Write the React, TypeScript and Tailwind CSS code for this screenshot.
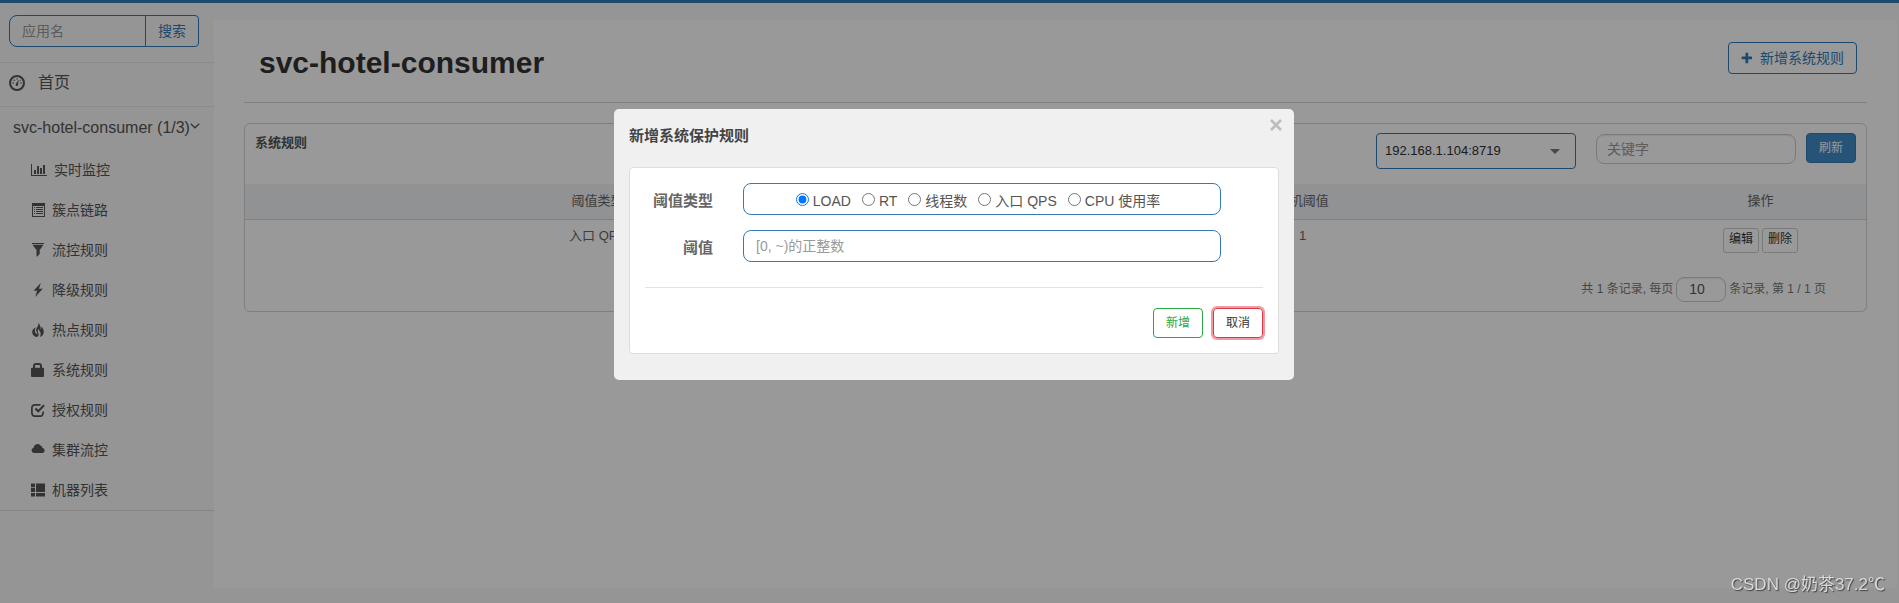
import React from "react";

type IconProps = { className?: string };

function Svg({ className = "h-[14px] w-[14px]", children }: { className?: string; children: React.ReactNode }) {
  return (
    <svg viewBox="0 0 14 14" fill="currentColor" aria-hidden="true" className={`${className} shrink-0`}>
      {children}
    </svg>
  );
}

const DashboardIcon = () => (
  <Svg className="h-4 w-4">
    <circle cx="7" cy="7" r="6.1" fill="none" stroke="currentColor" strokeWidth="1.8" />
    <path d="M6 7.9 8.4 3.9 8 8.4a1.1 1.1 0 1 1-2-.5z" />
    <circle cx="3.6" cy="7" r=".7" />
    <circle cx="4.6" cy="4.6" r=".7" />
    <circle cx="7" cy="3.5" r=".6" />
    <circle cx="10.4" cy="7" r=".7" />
    <circle cx="9.8" cy="4.7" r=".6" />
  </Svg>
);
const StatsIcon = () => (
  <svg viewBox="0 0 16 14" fill="currentColor" aria-hidden="true" className="h-[14px] w-4 shrink-0">
    <path d="M0 1h1v11h15v1H0z" />
    <path d="M3 7h2v4H3zM6 3h2v8H6zM9 5h2v6H9zM12 2h2v9h-2z" />
  </svg>
);
const ListIcon = () => (
  <Svg>
    <path fillRule="evenodd" d="M1 0h13v14H1zM2 3v10h11V3z" />
    <path d="M3 4h1v1H3zM5 4h7v1H5zM3 6h1v1H3zM5 6h7v1H5zM3 8h1v1H3zM5 8h7v1H5zM3 10h1v1H3zM5 10h7v1H5z" />
  </Svg>
);
const FilterIcon = () => (
  <Svg>
    <path d="M1 0h12v1H1zM1.500 1.800h11L8.700 7v4L5.500 14V7z" />
  </Svg>
);
const FlashIcon = () => (
  <Svg>
    <path d="M9.800 0 2.500 7.800h3.600L4.200 14 11.800 5.700H8z" />
  </Svg>
);
const FireIcon = () => (
  <Svg>
    <path d="M7.300 0c.3 1.800-.2 2.700-1 3.900-1 1.500-1.700 2.900-.9 4.600.6 1.300 1.200 1.700 1 2.800C5 11 3.700 9.700 4 7.300 4 6 4.400 5.200 4.300 4.500 2.400 5.700 1 7.300 1.200 9.500c.2 2.200 1.700 3.800 4 4.500 1.500-.2 2.500-1.200 2.500-2.600 0-1.300-1-2.100-1-3.400 0-.9.4-1.600 1-2.300 0 1.500.7 2.100 1.300 3 .9 1.300 1 3.300-.3 5.200 2.500-.8 4.100-2.500 4.100-5 0-2.300-1.200-4-2.900-5.400.3 1.400.2 2.200-.4 2.900C9.700 4 9.200 1.600 7.300 0z" />
  </Svg>
);
const LockIcon = () => (
  <Svg>
    <path
      fillRule="evenodd"
      d="M2 4.800V3A3 3 0 0 1 5 0h3a3 3 0 0 1 3 3v1.800h1a1 1 0 0 1 1 1V13a1 1 0 0 1-1 1H1a1 1 0 0 1-1-1V5.800a1 1 0 0 1 1-1zM4 4.800h5V3.200C9 2.400 8.600 2 7.800 2H5.200C4.400 2 4 2.400 4 3.200z"
    />
  </Svg>
);
const CheckIcon = () => (
  <Svg>
    <path d="M9.500 1.800H4A3.100 3.100 0 0 0 .9 4.900v5.200A3.100 3.100 0 0 0 4 13.200h5a3.100 3.100 0 0 0 3.100-3.100V8.500" fill="none" stroke="currentColor" strokeWidth="1.700" />
    <path d="m3.700 6.200 1.500-1.400 2.100 2 5.100-5.300 1.300 1.400-6.400 6.900z" />
  </Svg>
);
const CloudIcon = () => (
  <Svg>
    <path d="M3 10a2.700 2.700 0 0 1-.4-5.300A3.900 3.900 0 0 1 9.500 2.500a3 3 0 0 1 2 2.400A2.600 2.600 0 0 1 11.600 10z" />
  </Svg>
);
const MachineIcon = () => (
  <Svg>
    <path d="M0 .5h4v3.700H0zM0 5h4v4H0zM0 10h4v3.500H0zM5 .5h9V9H5zM5 10h9v3.500H5z" />
  </Svg>
);
const PlusIcon = ({ className }: IconProps) => (
  <Svg className={className}>
    <path d="M5.200 1h3.200v4.300h4.400v3.200H8.400V13H5.200V8.500H.8V5.300h4.400z" />
  </Svg>
);

const menu = [
  { label: "实时监控", icon: <StatsIcon /> },
  { label: "簇点链路", icon: <ListIcon /> },
  { label: "流控规则", icon: <FilterIcon /> },
  { label: "降级规则", icon: <FlashIcon /> },
  { label: "热点规则", icon: <FireIcon /> },
  { label: "系统规则", icon: <LockIcon /> },
  { label: "授权规则", icon: <CheckIcon /> },
  { label: "集群流控", icon: <CloudIcon /> },
  { label: "机器列表", icon: <MachineIcon /> },
];

const thresholdTypes = ["LOAD", "RT", "线程数", "入口 QPS", "CPU 使用率"];

function Sidebar() {
  return (
    <aside className="w-[214px] shrink-0">
      <form className="flex h-[60px] border-b border-[#e7e7e7] px-[9px] pt-3">
        <input
          aria-label="应用名"
          placeholder="应用名"
          className="h-8 w-[137px] rounded-l-lg border border-[#337ab7] bg-transparent px-3 text-sm placeholder:text-[#999]"
        />
        <button type="button" className="-ml-px h-8 w-[54px] rounded-r border border-[#337ab7] text-sm text-[#337ab7]">
          搜索
        </button>
      </form>
      <nav className="border-b border-[#dcdcdc] text-[#555]">
        <a href="#home" className="flex h-11 items-center gap-[13px] border-b border-[#e7e7e7] pb-1 pl-[9px] text-base">
          <DashboardIcon />
          首页
        </a>
        <a href="#app" className="flex h-[43px] items-center pb-[2px] pl-[13px] text-base whitespace-nowrap">
          svc-hotel-consumer (1/3)
          <svg viewBox="0 0 10 6" className="mb-1 h-[6px] w-[10px]" fill="none" stroke="currentColor" aria-hidden="true">
            <path d="m.8.800 4.200 4 4.200-4" strokeWidth="1.200" />
          </svg>
        </a>
        <ul>
          {menu.map((item) => (
            <li key={item.label}>
              <a href={`#${item.label}`} className="flex h-10 items-center gap-[7px] pl-[31px] text-sm">
                {item.icon}
                {item.label}
              </a>
            </li>
          ))}
        </ul>
      </nav>
    </aside>
  );
}

function RulesCard() {
  return (
    <section className="rounded-md border border-[#d5d5d5]">
      <div className="flex h-[60px] items-start pt-[9px] pr-[10px] pl-[10px]">
        <h2 className="flex-1 text-[13px] leading-5 font-bold text-[#555]">系统规则</h2>
        <div className="relative mr-5">
          <select
            aria-label="机器"
            className="h-9 w-[200px] appearance-none rounded border border-[#337ab7] bg-white px-2 text-[13px] text-[#303030]"
          >
            <option>192.168.1.104:8719</option>
          </select>
          <svg viewBox="0 0 10 5" className="pointer-events-none absolute top-4 right-4 h-[5px] w-[10px] fill-[#777]" aria-hidden="true">
            <path d="M0 0h10L5 5z" />
          </svg>
        </div>
        <input
          aria-label="关键字"
          placeholder="关键字"
          className="mt-px mr-[10px] h-[30px] w-[200px] rounded-lg border border-[#ccc] px-[10px] text-sm shadow-[inset_0_1px_1px_rgba(0,0,0,0.075)] placeholder:text-[#999]"
        />
        <button type="button" className="h-[30px] w-[50px] rounded border border-[#337ab7] bg-[#428bca] text-xs text-white">
          刷新
        </button>
      </div>
      <table className="w-full table-fixed text-center text-[13px] text-[#666]">
        <colgroup>
          <col className="w-[43.5%]" />
          <col className="w-[43.5%]" />
          <col className="w-[13%]" />
        </colgroup>
        <thead className="border-b border-[#d5d5d5] bg-[#f0f3f6]">
          <tr className="h-[35px]">
            <th className="p-0 pb-px font-normal">阈值类型</th>
            <th className="p-0 pb-px font-normal">单机阈值</th>
            <th className="p-0 pb-px font-normal">操作</th>
          </tr>
        </thead>
        <tbody>
          <tr className="align-top">
            <td className="pt-[6px]">入口 QPS</td>
            <td className="pt-[6px]">1</td>
            <td className="pt-2">
              <div className="flex justify-center gap-[3px]">
                <button type="button" className="h-[25px] w-9 rounded-[3px] border border-[#ccc] pb-[2px] text-xs text-[#333]">
                  编辑
                </button>
                <button type="button" className="h-[25px] w-9 rounded-[3px] border border-[#ccc] pb-[2px] text-xs text-[#333]">
                  删除
                </button>
              </div>
            </td>
          </tr>
        </tbody>
      </table>
      <div className="flex items-center justify-end gap-[3px] pt-6 pr-10 pb-[9px] text-xs text-[#777]">
        <span>共 1 条记录, 每页</span>
        <input
          aria-label="每页条数"
          defaultValue="10"
          className="h-[25px] w-[50px] rounded-lg border border-[#ccc] pl-3 text-sm text-[#555] shadow-[inset_0_1px_1px_rgba(0,0,0,0.075)]"
        />
        <span>条记录, 第 1 / 1 页</span>
      </div>
    </section>
  );
}

function RuleDialog() {
  return (
    <div className="fixed inset-0 flex items-start justify-center bg-black/40 pt-[109px] pl-[9px]">
      <div role="dialog" aria-labelledby="dialog-title" className="relative w-[680px] rounded-[5px] bg-[#f0f0f0] px-[15px] pt-4 pb-[26px]">
        <button type="button" aria-label="关闭" className="absolute top-[10px] right-3 text-[#bcbcbc]">
          <svg viewBox="0 0 12 12" className="h-3 w-3" fill="none" stroke="currentColor" strokeWidth="2.600" aria-hidden="true">
            <path d="m1 1 10 10M11 1 1 11" />
          </svg>
        </button>
        <h3 id="dialog-title" className="mb-[20px] text-[15px] leading-[22px] font-bold text-[#444]">
          新增系统保护规则
        </h3>
        <form className="rounded border border-[#ddd] bg-white px-[15px] pt-[15px] pb-[15px]">
          <div role="radiogroup" aria-labelledby="type-label" className="mb-[15px] flex items-center">
            <span id="type-label" className="mr-[30px] w-[68px] pt-1 text-right text-[15px] font-bold whitespace-nowrap text-[#666]">
              阈值类型
            </span>
            <div className="flex h-8 w-[478px] items-center justify-center gap-[11px] rounded-lg border border-[#337ab7] pr-2 text-sm text-[#555]">
              {thresholdTypes.map((type, i) => (
                <label key={type} className="flex items-center gap-1 pt-1 whitespace-nowrap">
                  <input type="radio" name="thresholdType" defaultChecked={i === 0} className="mb-[3px] h-[13px] w-[13px]" />
                  {type}
                </label>
              ))}
            </div>
          </div>
          <div className="flex items-center">
            <label htmlFor="threshold" className="mr-[30px] w-[68px] pt-1 text-right text-[15px] font-bold text-[#666]">
              阈值
            </label>
            <input
              id="threshold"
              placeholder="[0, ~)的正整数"
              className="h-8 w-[478px] rounded-lg border border-[#337ab7] px-3 text-sm placeholder:text-[#999]"
            />
          </div>
          <hr className="mt-[25px] mb-5 border-[#e3e3e3]" />
          <div className="flex justify-end gap-[10px]">
            <button type="button" className="h-[30px] w-[50px] rounded border border-[#28a745] text-xs text-[#28a745]">
              新增
            </button>
            <button
              type="button"
              className="h-[30px] w-[50px] rounded border border-[#dc3545] text-xs text-[#333] shadow-[0_0_0_2px_rgba(220,53,69,0.5)]"
            >
              取消
            </button>
          </div>
        </form>
      </div>
    </div>
  );
}

export default function App() {
  return (
    <div className="flex min-h-screen flex-col border-t-[3px] border-[#337ab7] bg-[#f8f8f8] font-['Liberation_Sans','Noto_Sans_CJK_SC',sans-serif]">
      <div className="flex flex-1">
        <Sidebar />
        <main className="mt-[17px] mr-[2px] mb-[15px] flex-1 bg-white pr-[30px] pl-[30px]">
          <header className="mb-5 flex h-[83px] items-start justify-between border-b border-[#d5d5d5] pt-[22px] pr-[10px] pl-[15px]">
            <h1 className="text-[30px] leading-[42px] font-bold text-[#333]">svc-hotel-consumer</h1>
            <button type="button" className="flex h-8 items-center gap-[7px] rounded border border-[#337ab7] px-3 text-sm text-[#337ab7]">
              <PlusIcon className="h-3 w-3" />
              新增系统规则
            </button>
          </header>
          <RulesCard />
        </main>
      </div>
      <RuleDialog />
      <div className="fixed right-[14px] bottom-[6px] text-[17px] leading-6 text-[#d8d8d8] [text-shadow:1px_1px_1px_#444]">CSDN @奶茶37.2℃</div>
    </div>
  );
}
